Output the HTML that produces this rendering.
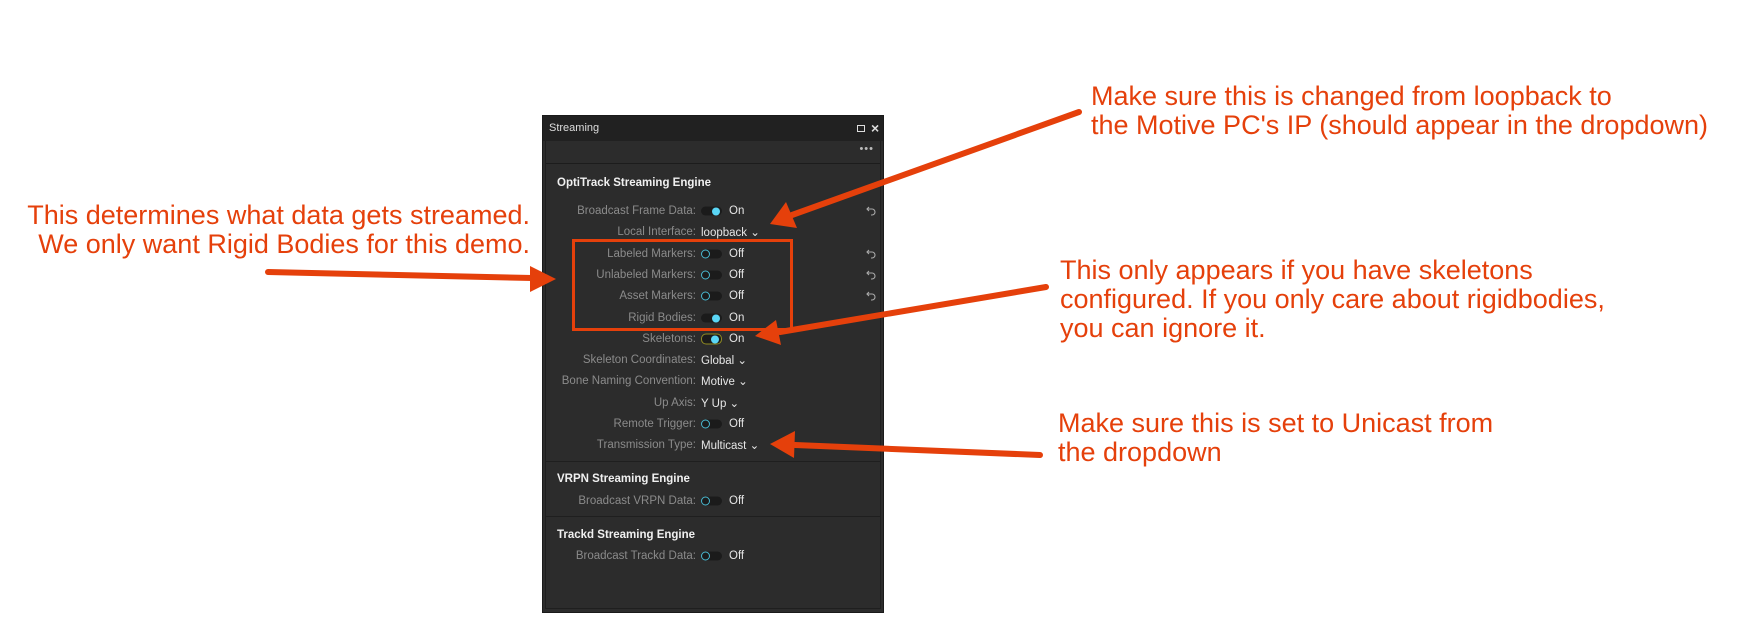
<!DOCTYPE html>
<html><head><meta charset="utf-8"><style>
*{margin:0;padding:0;box-sizing:border-box}
body{width:1754px;height:638px;background:#fff;position:relative;overflow:hidden;font-family:"Liberation Sans",sans-serif}
.ann{position:absolute;color:#e5400b;font-family:"Liberation Sans Narrow","Liberation Sans",sans-serif;font-size:27px;line-height:29px;white-space:nowrap}
#panel{position:absolute;left:542px;top:115px;width:342px;height:498px;background:#2c2c2c;border:1px solid #1a1a1a}
#title{position:absolute;left:0;top:0;width:340px;height:25px;background:#212121;color:#ddd;font-size:11px;line-height:25px;padding-left:6px}
#tb{position:absolute;left:3px;top:25px;width:334px;height:23px;border-bottom:1px solid #1c1c1c}
.side{position:absolute;top:25px;bottom:3px;width:1px;background:#1f1f1f}
.lbl{position:absolute;right:187px;color:#8b8b8b;font-size:11.5px;white-space:nowrap;transform:translateY(-50%)}
.val{position:absolute;left:158px;color:#e6e6e6;font-size:11.5px;white-space:nowrap;transform:translateY(-50%)}
.oo{position:absolute;left:186px;color:#e6e6e6;font-size:11.5px;transform:translateY(-50%)}
.hd{position:absolute;left:14px;color:#f0f0f0;font-size:11.5px;font-weight:bold;transform:translateY(-50%)}
.tg{position:absolute;left:158px;width:21px;height:9px;border-radius:5px;background:#1b1b1b;transform:translateY(-50%)}
.tg.on::after{content:"";position:absolute;right:2px;top:0.5px;width:8px;height:8px;border-radius:50%;background:#5ad6f6}
.tg.off::after{content:"";position:absolute;left:0;top:0;width:7px;height:7px;border-radius:50%;border:1.5px solid #4ab8d0}
.sep{position:absolute;left:3px;width:334px;height:1px;background:#1f1f1f}
.rv{position:absolute;left:323px;transform:translateY(-50%)}
</style></head><body>

<div class="ann" style="left:1091px;top:82px">Make sure this is changed from loopback to<br>the Motive PC's IP (should appear in the dropdown)</div>
<div class="ann" style="left:1060px;top:256px">This only appears if you have skeletons<br>configured. If you only care about rigidbodies,<br>you can ignore it.</div>
<div class="ann" style="right:1224px;top:201px;text-align:right">This determines what data gets streamed.<br>We only want Rigid Bodies for this demo.</div>
<div class="ann" style="left:1058px;top:409px">Make sure this is set to Unicast from<br>the dropdown</div>

<div id="panel">
<div id="title">Streaming<span style="position:absolute;left:314px;top:9px;width:8px;height:7px;border:1.5px solid #ddd"></span><span style="position:absolute;left:328px;top:0;font-size:14px;font-weight:bold">×</span></div>
<div class="side" style="left:2px"></div><div class="side" style="left:337px"></div>
<div id="tb"><span style="position:absolute;right:6px;top:2px;color:#bbb;font-size:11px;letter-spacing:1px">•••</span></div>

<div class="hd" style="top:67px">OptiTrack Streaming Engine</div>
<div class="lbl" style="top:95px">Broadcast Frame Data:</div><div class="tg on" style="top:95px"></div><div class="oo" style="top:95px">On</div>
<div class="lbl" style="top:116px">Local Interface:</div><div class="val" style="top:116px">loopback ⌄</div>
<div class="lbl" style="top:138px">Labeled Markers:</div><div class="tg off" style="top:138px"></div><div class="oo" style="top:138px">Off</div>
<div class="lbl" style="top:159px">Unlabeled Markers:</div><div class="tg off" style="top:159px"></div><div class="oo" style="top:159px">Off</div>
<div class="lbl" style="top:180px">Asset Markers:</div><div class="tg off" style="top:180px"></div><div class="oo" style="top:180px">Off</div>
<div class="lbl" style="top:202px">Rigid Bodies:</div><div class="tg on" style="top:202px"></div><div class="oo" style="top:202px">On</div>
<div class="lbl" style="top:223px">Skeletons:</div><div class="tg on" style="top:223px;border:1.5px solid #8f8a22;height:11px"></div><div class="oo" style="top:223px">On</div>
<div class="lbl" style="top:244px">Skeleton Coordinates:</div><div class="val" style="top:244px">Global ⌄</div>
<div class="lbl" style="top:265px">Bone Naming Convention:</div><div class="val" style="top:265px">Motive ⌄</div>
<div class="lbl" style="top:287px">Up Axis:</div><div class="val" style="top:287px">Y Up ⌄</div>
<div class="lbl" style="top:308px">Remote Trigger:</div><div class="tg off" style="top:308px"></div><div class="oo" style="top:308px">Off</div>
<div class="lbl" style="top:329px">Transmission Type:</div><div class="val" style="top:329px">Multicast ⌄</div>
<div class="sep" style="top:345px"></div>
<div class="hd" style="top:363px">VRPN Streaming Engine</div>
<div class="lbl" style="top:385px">Broadcast VRPN Data:</div><div class="tg off" style="top:385px"></div><div class="oo" style="top:385px">Off</div>
<div class="sep" style="top:400px"></div>
<div class="hd" style="top:419px">Trackd Streaming Engine</div>
<div class="lbl" style="top:440px">Broadcast Trackd Data:</div><div class="tg off" style="top:440px"></div><div class="oo" style="top:440px">Off</div>
<div class="sep" style="top:492px"></div>

<svg class="rv" style="top:95px" width="10" height="10" viewBox="0 0 10 10"><path d="M3 1 L1 3 L3 5 M1 3 H6 A3 3 0 0 1 6 9 H5" fill="none" stroke="#aaa" stroke-width="1.1"/></svg>
<svg class="rv" style="top:138px" width="10" height="10" viewBox="0 0 10 10"><path d="M3 1 L1 3 L3 5 M1 3 H6 A3 3 0 0 1 6 9 H5" fill="none" stroke="#aaa" stroke-width="1.1"/></svg>
<svg class="rv" style="top:159px" width="10" height="10" viewBox="0 0 10 10"><path d="M3 1 L1 3 L3 5 M1 3 H6 A3 3 0 0 1 6 9 H5" fill="none" stroke="#aaa" stroke-width="1.1"/></svg>
<svg class="rv" style="top:180px" width="10" height="10" viewBox="0 0 10 10"><path d="M3 1 L1 3 L3 5 M1 3 H6 A3 3 0 0 1 6 9 H5" fill="none" stroke="#aaa" stroke-width="1.1"/></svg>
</div>

<svg style="position:absolute;left:0;top:0" width="1754" height="638">
<rect x="573.5" y="240.5" width="218" height="89" fill="none" stroke="#e5400b" stroke-width="3"/>
<g stroke="#e5400b" stroke-width="6" stroke-linecap="round" fill="#e5400b">
<line x1="1079" y1="112" x2="792" y2="215"/>
<line x1="268" y1="272" x2="532" y2="278"/>
<line x1="1046" y1="287" x2="780" y2="332"/>
<line x1="1040" y1="455" x2="795" y2="445"/>
</g>
<g fill="#e5400b">
<polygon points="770,224 786,202 797,228"/>
<polygon points="556,279 530,266 530,292"/>
<polygon points="755,336 776,320 781,345"/>
<polygon points="770,444 795,431 794,458"/>
</g>
</svg>
</body></html>
